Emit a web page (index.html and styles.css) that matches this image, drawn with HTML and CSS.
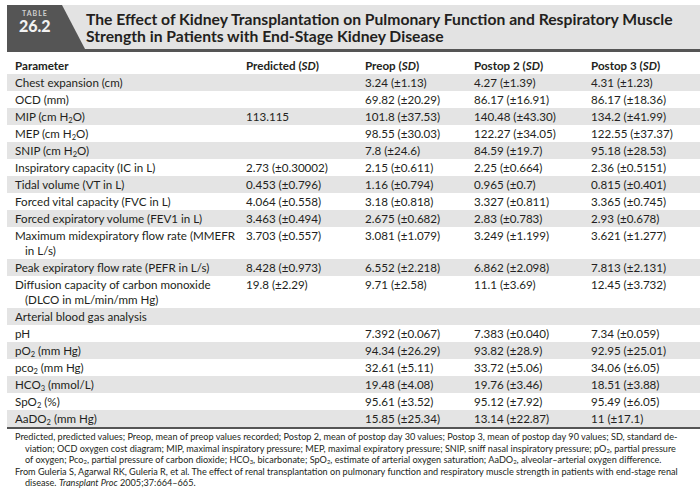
FILE: index.html
```html
<!DOCTYPE html>
<html lang="en">
<head>
<meta charset="utf-8">
<title>Table 26.2</title>
<link rel="stylesheet" href="styles.css">
</head>
<body>
<div class="page">
  <header class="caption">
    <div class="tab">
      <span class="tab-label">TABLE</span>
      <span class="tab-num">26.2</span>
    </div>
    <h1 class="title">The Effect of Kidney Transplantation on Pulmonary Function and Respiratory Muscle<br>Strength in Patients with End-Stage Kidney Disease</h1>
  </header>
  <table class="data">
    <colgroup>
      <col class="c1"><col class="c2"><col class="c3"><col class="c4"><col class="c5">
    </colgroup>
    <thead>
      <tr><th>Parameter</th><th>Predicted (<i>SD</i>)</th><th>Preop (<i>SD</i>)</th><th>Postop 2 (<i>SD</i>)</th><th>Postop 3 (<i>SD</i>)</th></tr>
    </thead>
    <tbody>
      <tr><td>Chest expansion (cm)</td><td></td><td>3.24 (±1.13)</td><td>4.27 (±1.39)</td><td>4.31 (±1.23)</td></tr>
      <tr><td>OCD (mm)</td><td></td><td>69.82 (±20.29)</td><td>86.17 (±16.91)</td><td>86.17 (±18.36)</td></tr>
      <tr><td>MIP (cm H<sub>2</sub>O)</td><td>113.115</td><td>101.8 (±37.53)</td><td>140.48 (±43.30)</td><td>134.2 (±41.99)</td></tr>
      <tr><td>MEP (cm H<sub>2</sub>O)</td><td></td><td>98.55 (±30.03)</td><td>122.27 (±34.05)</td><td>122.55 (±37.37)</td></tr>
      <tr><td>SNIP (cm H<sub>2</sub>O)</td><td></td><td>7.8 (±24.6)</td><td>84.59 (±19.7)</td><td>95.18 (±28.53)</td></tr>
      <tr><td>Inspiratory capacity (IC in L)</td><td>2.73 (±0.30002)</td><td>2.15 (±0.611)</td><td>2.25 (±0.664)</td><td>2.36 (±0.5151)</td></tr>
      <tr><td>Tidal volume (VT in L)</td><td>0.453 (±0.796)</td><td>1.16 (±0.794)</td><td>0.965 (±0.7)</td><td>0.815 (±0.401)</td></tr>
      <tr><td>Forced vital capacity (FVC in L)</td><td>4.064 (±0.558)</td><td>3.18 (±0.818)</td><td>3.327 (±0.811)</td><td>3.365 (±0.745)</td></tr>
      <tr><td>Forced expiratory volume (FEV1 in L)</td><td>3.463 (±0.494)</td><td>2.675 (±0.682)</td><td>2.83 (±0.783)</td><td>2.93 (±0.678)</td></tr>
      <tr class="two"><td>Maximum midexpiratory flow rate (MMEFR<br><span class="ind">in L/s)</span></td><td>3.703 (±0.557)</td><td>3.081 (±1.079)</td><td>3.249 (±1.199)</td><td>3.621 (±1.277)</td></tr>
      <tr><td>Peak expiratory flow rate (PEFR in L/s)</td><td>8.428 (±0.973)</td><td>6.552 (±2.218)</td><td>6.862 (±2.098)</td><td>7.813 (±2.131)</td></tr>
      <tr class="two"><td>Diffusion capacity of carbon monoxide<br><span class="ind">(DLCO in mL/min/mm Hg)</span></td><td>19.8 (±2.29)</td><td>9.71 (±2.58)</td><td>11.1 (±3.69)</td><td>12.45 (±3.732)</td></tr>
      <tr><td>Arterial blood gas analysis</td><td></td><td></td><td></td><td></td></tr>
      <tr><td>pH</td><td></td><td>7.392 (±0.067)</td><td>7.383 (±0.040)</td><td>7.34 (±0.059)</td></tr>
      <tr><td>pO<sub>2</sub> (mm Hg)</td><td></td><td>94.34 (±26.29)</td><td>93.82 (±28.9)</td><td>92.95 (±25.01)</td></tr>
      <tr><td>pco<sub>2</sub> (mm Hg)</td><td></td><td>32.61 (±5.11)</td><td>33.72 (±5.06)</td><td>34.06 (±6.05)</td></tr>
      <tr><td>HCO<sub>3</sub> (mmol/L)</td><td></td><td>19.48 (±4.08)</td><td>19.76 (±3.46)</td><td>18.51 (±3.88)</td></tr>
      <tr><td>SpO<sub>2</sub> (%)</td><td></td><td>95.61 (±3.52)</td><td>95.12 (±7.92)</td><td>95.49 (±6.05)</td></tr>
      <tr><td>AaDO<sub>2</sub> (mm Hg)</td><td></td><td>15.85 (±25.34)</td><td>13.14 (±22.87)</td><td>11 (±17.1)</td></tr>
    </tbody>
  </table>
  <div class="notes">
    <p>Predicted, predicted values; Preop, mean of preop values recorded; Postop 2, mean of postop day 30 values; Postop 3, mean of postop day 90 values; SD, standard de-<br>viation; OCD oxygen cost diagram; MIP, maximal inspiratory pressure; MEP, maximal expiratory pressure; SNIP, sniff nasal inspiratory pressure; pO<sub>2</sub>, partial pressure<br>of oxygen; Pco<sub>2</sub>, partial pressure of carbon dioxide; HCO<sub>3</sub>, bicarbonate; SpO<sub>2</sub>, estimate of arterial oxygen saturation; AaDO<sub>2</sub>, alveolar–arterial oxygen difference.</p>
    <p>From Guleria S, Agarwal RK, Guleria R, et al. The effect of renal transplantation on pulmonary function and respiratory muscle strength in patients with end-stage renal<br>disease. <i>Transplant Proc</i> 2005;37:664–665.</p>
  </div>
</div>
</body>
</html>
```
FILE: styles.css
```css
html, body {
  margin: 0;
  padding: 0;
  background: #ffffff;
}

.page {
  width: 700px;
  padding: 5px 0 0 7px;
  box-sizing: border-box;
  font-family: Lato, "Open Sans", "Liberation Sans", sans-serif;
  color: #231f20;
}

.caption {
  display: flex;
  height: 44px;
  background: #e3e3e3;
  border-bottom: 3px solid #555555;
}

.tab {
  width: 78px;
  flex: none;
  background: #555555;
  clip-path: polygon(0 0, 55px 0, 100% 100%, 0 100%);
  display: flex;
  flex-direction: column;
  align-items: flex-start;
  padding: 3px 0 0 12px;
  box-sizing: border-box;
}

.tab-label {
  font-size: 7px;
  letter-spacing: 1px;
  color: #cfcfcf;
  line-height: 10px;
  font-weight: 700;
  padding-left: 3px;
}

.tab-num {
  font-size: 16px;
  font-weight: 900;
  color: #f2f2f2;
  line-height: 16px;
}

.title {
  margin: 0 0 0 1px;
  padding-top: 6px;
  font-size: 15.7px;
  line-height: 17px;
  font-weight: 700;
  color: #231f20;
  white-space: nowrap;
}

.data {
  width: 693px;
  table-layout: fixed;
  border-collapse: collapse;
  font-size: 11.6px;
  border-bottom: 2px solid #555555;
}

.c1 { width: 231px; }
.c2 { width: 119px; }
.c3 { width: 109px; }
.c4 { width: 117px; }
.c5 { width: 117px; }

.data th {
  text-align: left;
  font-weight: 700;
  padding: 6px 8px 0 8px;
  line-height: 16px;
  white-space: nowrap;
}

.data td {
  padding: 1px 8px;
  line-height: 15px;
  vertical-align: top;
  white-space: nowrap;
}

.data tbody tr:nth-child(odd) td {
  background: #e4e4e4;
}

.ind {
  padding-left: 10px;
}

sub {
  font-size: 0.65em;
  line-height: 0;
  vertical-align: -0.25em;
}

.notes {
  padding-top: 2px;
  font-size: 9.15px;
  line-height: 11.5px;
}

.notes p {
  margin: 0;
  padding-left: 18px;
  text-indent: -10px;
  white-space: nowrap;
}
```
